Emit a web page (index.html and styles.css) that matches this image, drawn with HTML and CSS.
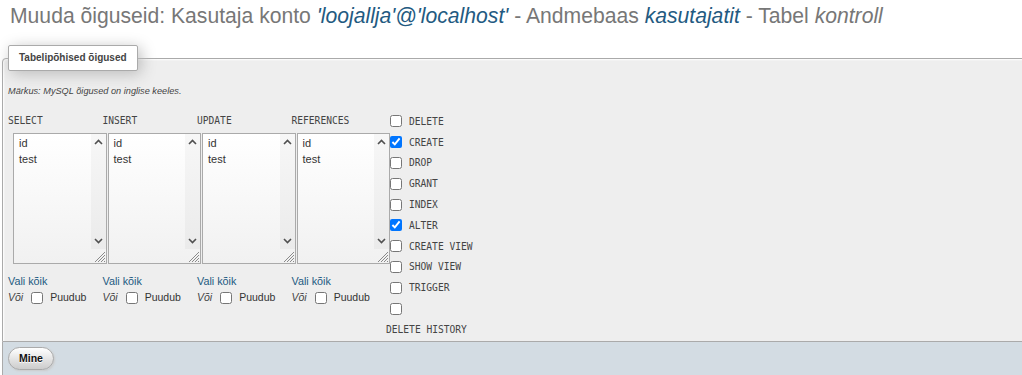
FILE: index.html
```html
<!DOCTYPE html>
<html lang="et">
<head>
<meta charset="utf-8">
<title>Muuda õiguseid</title>
<link rel="stylesheet" href="styles.css">
</head>
<body>
<h2 class="page-title">Muuda õiguseid: Kasutaja konto <a class="ref" href="#">'loojallja'@'localhost'</a> - Andmebaas <a class="ref" href="#">kasutajatit</a> - Tabel <i class="plain">kontroll</i></h2>

<fieldset class="privs">
  <legend class="legend">Tabelipõhised õigused</legend>
  <p class="note">Märkus: MySQL õigused on inglise keeles.</p>
  <div class="grid">
    <div class="col">
      <div class="col-label">SELECT</div>
      <div class="listbox">
        <div class="opts"><div>id</div><div>test</div></div>
        <div class="sbar">
          <div class="track">
            <svg class="chev" width="9" height="6" viewBox="0 0 9 6"><polyline points="1,5 4.5,1.5 8,5" fill="none" stroke="#505050" stroke-width="1.6"/></svg>
            <svg class="chev" width="9" height="6" viewBox="0 0 9 6"><polyline points="1,1 4.5,4.5 8,1" fill="none" stroke="#505050" stroke-width="1.6"/></svg>
          </div>
          <svg class="grip" width="15" height="14" viewBox="0 0 15 14"><path d="M14 3 L4 13 M14 6 L7 13 M14 9 L10 13 M14 12 L13 13" stroke="#8a8a8a" stroke-width="1"/></svg>
        </div>
      </div>
      <a class="vali" href="#">Vali kõik</a>
      <div class="voi"><i>Või</i><input type="checkbox" class="cb"><span>Puudub</span></div>
    </div>
    <div class="col">
      <div class="col-label">INSERT</div>
      <div class="listbox">
        <div class="opts"><div>id</div><div>test</div></div>
        <div class="sbar">
          <div class="track">
            <svg class="chev" width="9" height="6" viewBox="0 0 9 6"><polyline points="1,5 4.5,1.5 8,5" fill="none" stroke="#505050" stroke-width="1.6"/></svg>
            <svg class="chev" width="9" height="6" viewBox="0 0 9 6"><polyline points="1,1 4.5,4.5 8,1" fill="none" stroke="#505050" stroke-width="1.6"/></svg>
          </div>
          <svg class="grip" width="15" height="14" viewBox="0 0 15 14"><path d="M14 3 L4 13 M14 6 L7 13 M14 9 L10 13 M14 12 L13 13" stroke="#8a8a8a" stroke-width="1"/></svg>
        </div>
      </div>
      <a class="vali" href="#">Vali kõik</a>
      <div class="voi"><i>Või</i><input type="checkbox" class="cb"><span>Puudub</span></div>
    </div>
    <div class="col">
      <div class="col-label">UPDATE</div>
      <div class="listbox">
        <div class="opts"><div>id</div><div>test</div></div>
        <div class="sbar">
          <div class="track">
            <svg class="chev" width="9" height="6" viewBox="0 0 9 6"><polyline points="1,5 4.5,1.5 8,5" fill="none" stroke="#505050" stroke-width="1.6"/></svg>
            <svg class="chev" width="9" height="6" viewBox="0 0 9 6"><polyline points="1,1 4.5,4.5 8,1" fill="none" stroke="#505050" stroke-width="1.6"/></svg>
          </div>
          <svg class="grip" width="15" height="14" viewBox="0 0 15 14"><path d="M14 3 L4 13 M14 6 L7 13 M14 9 L10 13 M14 12 L13 13" stroke="#8a8a8a" stroke-width="1"/></svg>
        </div>
      </div>
      <a class="vali" href="#">Vali kõik</a>
      <div class="voi"><i>Või</i><input type="checkbox" class="cb"><span>Puudub</span></div>
    </div>
    <div class="col">
      <div class="col-label">REFERENCES</div>
      <div class="listbox">
        <div class="opts"><div>id</div><div>test</div></div>
        <div class="sbar">
          <div class="track">
            <svg class="chev" width="9" height="6" viewBox="0 0 9 6"><polyline points="1,5 4.5,1.5 8,5" fill="none" stroke="#505050" stroke-width="1.6"/></svg>
            <svg class="chev" width="9" height="6" viewBox="0 0 9 6"><polyline points="1,1 4.5,4.5 8,1" fill="none" stroke="#505050" stroke-width="1.6"/></svg>
          </div>
          <svg class="grip" width="15" height="14" viewBox="0 0 15 14"><path d="M14 3 L4 13 M14 6 L7 13 M14 9 L10 13 M14 12 L13 13" stroke="#8a8a8a" stroke-width="1"/></svg>
        </div>
      </div>
      <a class="vali" href="#">Vali kõik</a>
      <div class="voi"><i>Või</i><input type="checkbox" class="cb"><span>Puudub</span></div>
    </div>
    <div class="checks">
      <label class="row"><input type="checkbox" class="cb"><code>DELETE</code></label>
      <label class="row"><input type="checkbox" class="cb" checked><code>CREATE</code></label>
      <label class="row"><input type="checkbox" class="cb"><code>DROP</code></label>
      <label class="row"><input type="checkbox" class="cb"><code>GRANT</code></label>
      <label class="row"><input type="checkbox" class="cb"><code>INDEX</code></label>
      <label class="row"><input type="checkbox" class="cb" checked><code>ALTER</code></label>
      <label class="row"><input type="checkbox" class="cb"><code>CREATE VIEW</code></label>
      <label class="row"><input type="checkbox" class="cb"><code>SHOW VIEW</code></label>
      <label class="row"><input type="checkbox" class="cb"><code>TRIGGER</code></label>
      <label class="row"><input type="checkbox" class="cb"></label>
      <div class="row wrap"><code>DELETE HISTORY</code></div>
    </div>
  </div>
</fieldset>
<div class="footer">
  <button class="go" type="button">Mine</button>
</div>
</body>
</html>
```

FILE: styles.css
```css
html, body {
  margin: 0;
  padding: 0;
  background: #fff;
  overflow: hidden;
}
body {
  font-family: "Liberation Sans", Arial, sans-serif;
  color: #444;
}
.page-title {
  margin: 0;
  padding: 4px 0 0 10px;
  font-size: 21.15px;
  line-height: 24px;
  font-weight: normal;
  color: #777;
  white-space: nowrap;
}
.ref {
  color: #235a81;
  font-style: italic;
  text-decoration: none;
}
.plain {
  color: #777;
}
.privs {
  margin: 17px -20px 0 2px;
  padding: 0 5px 1px 5px;
  border: 1px solid #aaa;
  border-radius: 4px 4px 0 0;
  background: #eee;
  box-shadow: inset 1px 1px 2px #fff;
  min-width: 0;
}
.legend {
  padding: 5px 10px;
  margin-left: 0;
  font-size: 10px;
  line-height: 14px;
  font-weight: bold;
  color: #444;
  background: #fff;
  border: 1px solid #aaa;
  border-radius: 2px;
  box-shadow: 3px 3px 15px #bbb;
}
.note {
  margin: 15px 0 0;
  font-size: 9.2px;
  line-height: 10px;
  font-style: italic;
  color: #444;
}
.grid {
  display: flex;
  margin-top: 15px;
}
.col {
  flex: none;
  width: 94.5px;
}
.col-label, code {
  font-family: "DejaVu Sans Mono", "Liberation Mono", monospace;
  font-size: 9.6px;
  color: #444;
}
.col-label {
  padding-top: 3px;
  line-height: 14px;
  margin-bottom: 5px;
}
.listbox {
  display: flex;
  box-sizing: border-box;
  width: 93.5px;
  height: 131px;
  margin-left: 5px;
  border: 1px solid #aaa;
  background: linear-gradient(#fff, #f1f1f1);
}
.opts {
  flex: 1;
  padding: 1px 0 0 5px;
  font-size: 11px;
  line-height: 16px;
  color: #333;
}
.sbar {
  width: 15px;
  display: flex;
  flex-direction: column;
}
.track {
  flex: 1;
  background: rgba(0, 0, 0, 0.03);
  display: flex;
  flex-direction: column;
  justify-content: space-between;
  align-items: center;
  padding: 5px 0 5px;
}
.chev {
  display: block;
}
.grip {
  display: block;
}
.vali {
  display: block;
  margin-top: 9px;
  font-size: 10.8px;
  line-height: 16px;
  color: #235a81;
  text-decoration: none;
}
.voi {
  display: flex;
  align-items: center;
  height: 16px;
  font-size: 10.5px;
  color: #333;
}
.voi i {
  color: #444;
}
.voi .cb {
  margin: 1px 7px 0 8px;
}
.cb {
  width: 12px;
  height: 12px;
  flex: none;
}
.checks {
  flex: none;
  display: flex;
  flex-direction: column;
  margin-top: 0;
}
.row {
  display: flex;
  align-items: center;
  height: 20.8px;
}
.row .cb {
  margin: 0 7px 0 4px;
}
.footer {
  margin: 0 -20px 0 2px;
  padding: 5px 5px 8px;
  border-left: 1px solid #aaa;
  background: #d3dce3;
}
.go {
  display: block;
  height: 23px;
  padding: 0 10px;
  font-family: "Liberation Sans", Arial, sans-serif;
  font-size: 10.5px;
  font-weight: bold;
  color: #111;
  border: 1px solid #aaa;
  border-radius: 12px;
  background: linear-gradient(#fff, #ccc);
  text-shadow: 0 1px 0 #fff;
  box-shadow: 1px 1px 2px #ccc;
}
```
